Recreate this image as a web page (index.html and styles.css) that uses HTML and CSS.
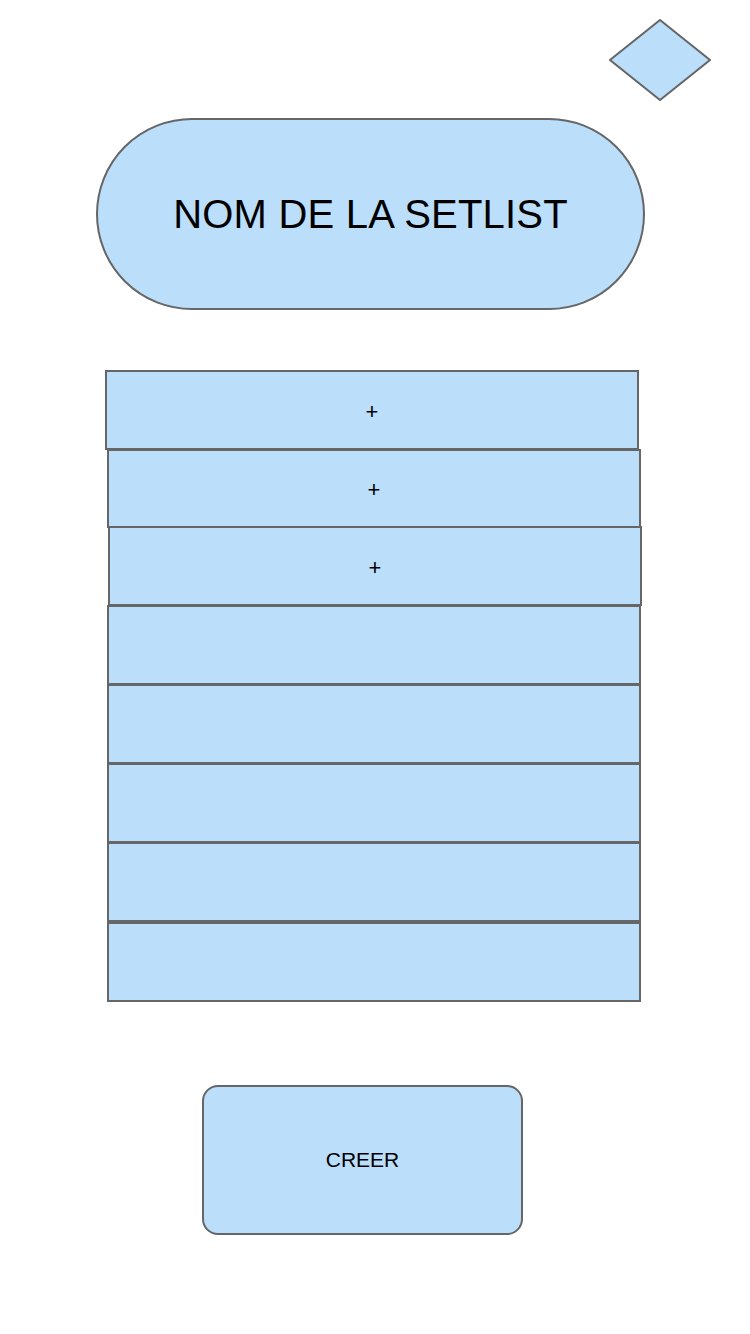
FILE: index.html
```html
<!DOCTYPE html>
<html lang="fr">
<head>
  <meta charset="UTF-8">
  <title>Nouvelle setlist</title>
  <meta name="viewport" content="width=device-width, initial-scale=1.0">
  <link rel="stylesheet" href="styles.css">
</head>
<body>

  <div class="topbar">
    <svg class="menu" width="102" height="82" viewBox="0 0 102 82">
      <polygon points="51,1 101,41 51,81 1,41" fill="#bbdefb" stroke="#666" stroke-width="2"/>
    </svg>
  </div>

  <div class="titre">NOM DE LA SETLIST</div>

  <div class="liste">
    <div class="ligne l1">+</div>
    <div class="ligne l2">+</div>
    <div class="ligne l3">+</div>
    <div class="ligne"></div>
    <div class="ligne"></div>
    <div class="ligne"></div>
    <div class="ligne l7"></div>
    <div class="ligne l8"></div>
  </div>

  <div class="bouton">CREER</div>

</body>
</html>
```

FILE: styles.css
```css
body {
  margin: 0;
  width: 750px;
  min-height: 1334px;
  background-color: #fff;
  font-family: "Liberation Sans", Arial, sans-serif;
  color: #000;
  display: flex;
  flex-direction: column;
  align-items: flex-start;
}

.topbar {
  align-self: stretch;
  display: flex;
  justify-content: flex-end;
  padding: 19px 39px 0 0;
}

.menu {
  display: block;
}

.titre {
  margin: 17px 0 0 96px;
  width: 549px;
  height: 192px;
  box-sizing: border-box;
  border: 2px solid #666;
  border-radius: 96px;
  background-color: #bbdefb;
  display: flex;
  align-items: center;
  justify-content: center;
  font-size: 40px;
  letter-spacing: 0.2px;
}

.liste {
  margin: 60px 0 0 107px;
  display: flex;
  flex-direction: column;
}

.ligne {
  width: 534px;
  height: 80px;
  box-sizing: border-box;
  border: 2px solid #666;
  background-color: #bbdefb;
  margin-top: -1px;
  padding-top: 3px;
  display: flex;
  align-items: center;
  justify-content: center;
  font-size: 22px;
}

.ligne.l1 { margin-top: 0; margin-left: -2px; }
.ligne.l2 { margin-top: -1px; height: 79px; }
.ligne.l3 { margin-top: -2px; margin-left: 1px; }
.ligne.l8 { margin-top: 0; }

.bouton {
  margin: 83px 0 0 202px;
  width: 321px;
  height: 150px;
  box-sizing: border-box;
  border: 2px solid #666;
  border-radius: 16px;
  background-color: #bbdefb;
  display: flex;
  align-items: center;
  justify-content: center;
  font-size: 21px;
}
```
